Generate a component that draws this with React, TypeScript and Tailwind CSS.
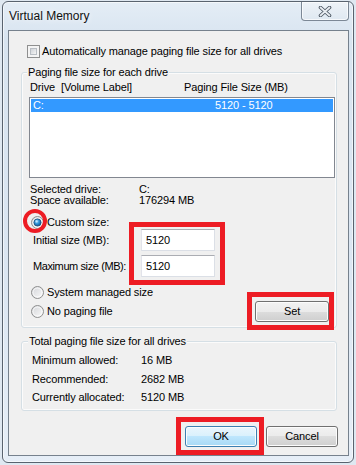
import React from "react";

function Radio({ checked }: { checked?: boolean }) {
  return (
    <svg width="13" height="13" viewBox="0 0 13 13" className="shrink-0">
      <circle cx="6.5" cy="6.5" r="6" fill="url(#radioBg)" stroke="#8e8f8f" />
      <circle cx="6.5" cy="6.5" r="4.5" fill="none" stroke="#ffffff" strokeOpacity="0.7" />
      {checked && (
        <>
          <circle cx="6.5" cy="6.5" r="3.6" fill="url(#radioDot)" stroke="#1b4c78" strokeWidth="0.8" />
          <circle cx="5.6" cy="5.4" r="1.1" fill="#bfe6ff" />
        </>
      )}
    </svg>
  );
}

function Checkbox() {
  return (
    <div className="w-[13px] h-[13px] shrink-0 border border-[#8e8f8f] bg-[#f4f4f4] p-[2px]">
      <div className="w-full h-full border border-[#b9bec4] bg-gradient-to-br from-[#cfd3d8] to-[#f4f4f4]" />
    </div>
  );
}

function Button({ label, primary, width }: { label: string; primary?: boolean; width: string }) {
  const look = primary
    ? "border-[#3c7fb1] bg-[linear-gradient(to_bottom,#eaf6fd_0%,#d9f0fc_50%,#bee6fd_50%,#a7d9f5_100%)]"
    : "border-[#707070] bg-[linear-gradient(to_bottom,#f2f2f2_0%,#ebebeb_50%,#dddddd_50%,#cfcfcf_100%)]";
  return (
    <div
      className={`${width} h-[21px] shrink-0 rounded-[3px] border ${look} shadow-[inset_0_0_0_1px_#fcfcfc] flex items-center justify-center`}
    >
      {label}
    </div>
  );
}

function TextBox({ value }: { value: string }) {
  return (
    <div className="w-[74px] h-[22px] bg-white border border-[#dbdfe6] border-t-[#abadb3] border-l-[#e2e3ea] flex items-center pl-[4px]">
      {value}
    </div>
  );
}

function InfoRow({ label, value, cls }: { label: string; value: string; cls: string }) {
  return (
    <div className={`flex items-center ${cls}`}>
      <div className="w-[109px] shrink-0">{label}</div>
      <div>{value}</div>
    </div>
  );
}

export default function App() {
  return (
    <div className="relative w-[356px] h-[465px] overflow-hidden bg-[#dfe8f1] text-[11px] tracking-[-0.12px] text-black font-['Liberation_Sans',Arial,sans-serif] leading-none">
      <svg width="0" height="0" className="absolute">
        <defs>
          <linearGradient id="radioBg" x1="0" y1="0" x2="1" y2="1">
            <stop offset="0" stopColor="#d2d4d8" />
            <stop offset="1" stopColor="#fbfbfb" />
          </linearGradient>
          <radialGradient id="radioDot" cx="0.4" cy="0.35" r="0.7">
            <stop offset="0" stopColor="#8ad0f8" />
            <stop offset="0.5" stopColor="#2a8fd4" />
            <stop offset="1" stopColor="#0f4f8a" />
          </radialGradient>
        </defs>
      </svg>

      {/* window frame */}
      <div className="ml-[2px] mt-[1px] w-[352px] h-[462px] rounded-[6px] border border-[#59636f] bg-[linear-gradient(to_bottom,#e4edf6_0%,#d8e4f0_8%,#dbe6f2_60%,#e6eef7_100%)] shadow-[inset_0_0_0_1px_rgba(255,255,255,0.6)]">
        {/* title bar */}
        <div className="h-[28px] flex justify-between">
          <div className="pl-[6px] pt-[7px] text-[12px] tracking-normal leading-[14px] text-[#111] [text-shadow:0_0_6px_#ffffff]">
            Virtual Memory
          </div>
          <div className="mr-[4px] w-[48px] h-[19px] rounded-b-[4px] border border-t-0 border-[#7c8896] bg-[linear-gradient(to_bottom,#eef3f8,#dfe8f1)] shadow-[inset_0_0_0_1px_rgba(255,255,255,0.7)] flex items-center justify-center">
            <svg width="14" height="11" viewBox="0 0 14 11">
              <path d="M2.5 1.5 L11.5 9.5 M11.5 1.5 L2.5 9.5" stroke="#4b5561" strokeWidth="3.6" strokeLinecap="round" />
              <path d="M2.5 1.5 L11.5 9.5 M11.5 1.5 L2.5 9.5" stroke="#e9edf2" strokeWidth="1.8" strokeLinecap="round" />
            </svg>
          </div>
        </div>

        {/* client area */}
        <div className="ml-[5px] w-[341px] h-[426px] border border-[#76818d] bg-[#f0f0f0] flex flex-col">
          <div className="mt-[14px] ml-[18px] h-[13px] flex items-center gap-[2px]">
            <Checkbox />
            <span>Automatically manage paging file size for all drives</span>
          </div>

          {/* group 1 */}
          <div className="mt-[14px] ml-[12px] w-[316px] h-[256px] shrink-0 rounded-[3px] border border-[#d5dfe5] shadow-[inset_0_0_0_1px_#fbfbfb] flex flex-col">
            <div className="-mt-[8px] ml-[5px] w-fit h-[14px] px-[1px] bg-[#f0f0f0] leading-[14px]">
              Paging file size for each drive
            </div>
            <div className="mt-[1px] h-[14px] pl-[8px] flex items-center">
              <div className="w-[154px] shrink-0">Drive&nbsp;&nbsp;[Volume Label]</div>
              <div>Paging File Size (MB)</div>
            </div>
            <div className="mt-[3px] ml-[7px] w-[306px] h-[81px] shrink-0 border border-[#828790] bg-white p-[1px]">
              <div className="h-[13px] bg-[#3399ff] text-white flex items-center pl-[2px]">
                <div className="w-[182px] shrink-0">C:</div>
                <div>5120 - 5120</div>
              </div>
            </div>
            <InfoRow label="Selected drive:" value="C:" cls="mt-[6px] h-[11px] pl-[8px]" />
            <InfoRow label="Space available:" value="176294 MB" cls="h-[11px] pl-[8px]" />
            <div className="mt-[10px] h-[13px] pl-[9px] flex items-center gap-[3px]">
              <Radio checked />
              <span>Custom size:</span>
            </div>
            <div className="h-[22px] pl-[11px] flex items-center">
              <div className="w-[108px] shrink-0">Initial size (MB):</div>
              <TextBox value="5120" />
            </div>
            <div className="mt-[4px] h-[22px] pl-[11px] flex items-center">
              <div className="w-[108px] shrink-0 tracking-[-0.4px]">Maximum size (MB):</div>
              <TextBox value="5120" />
            </div>
            <div className="mt-[9px] h-[13px] pl-[9px] flex items-center gap-[3px]">
              <Radio />
              <span>System managed size</span>
            </div>
            <div className="mt-[2px] h-[21px] pl-[9px] pr-[7px] flex items-center justify-between">
              <div className="flex items-center gap-[3px] -mt-[1px]">
                <Radio />
                <span>No paging file</span>
              </div>
              <Button label="Set" width="w-[74px]" />
            </div>
          </div>

          {/* group 2 */}
          <div className="mt-[13px] ml-[12px] w-[316px] h-[70px] shrink-0 rounded-[3px] border border-[#d5dfe5] shadow-[inset_0_0_0_1px_#fbfbfb] flex flex-col">
            <div className="-mt-[8px] ml-[6px] w-fit h-[14px] px-[1px] bg-[#f0f0f0] leading-[14px]">
              Total paging file size for all drives
            </div>
            <InfoRow label="Minimum allowed:" value="16 MB" cls="mt-[5px] h-[14px] pl-[10px]" />
            <InfoRow label="Recommended:" value="2682 MB" cls="mt-[5px] h-[14px] pl-[10px]" />
            <InfoRow label="Currently allocated:" value="5120 MB" cls="mt-[4px] h-[14px] pl-[10px]" />
          </div>

          <div className="mt-[15px] mr-[10px] flex justify-end gap-[9px]">
            <Button label="OK" primary width="w-[72px]" />
            <Button label="Cancel" width="w-[72px]" />
          </div>
        </div>
      </div>

      {/* red annotations */}
      <div className="absolute left-[23px] top-[209px] w-[24px] h-[24px] rounded-full border-[4px] border-[#ed1c24]" />
      <div className="absolute left-[129px] top-[222px] w-[96px] h-[63px] border-[5px] border-[#ed1c24]" />
      <div className="absolute left-[247px] top-[292px] w-[87px] h-[38px] border-[5px] border-[#ed1c24]" />
      <div className="absolute left-[176px] top-[417px] w-[88px] h-[38px] border-[5px] border-[#ed1c24]" />
    </div>
  );
}
